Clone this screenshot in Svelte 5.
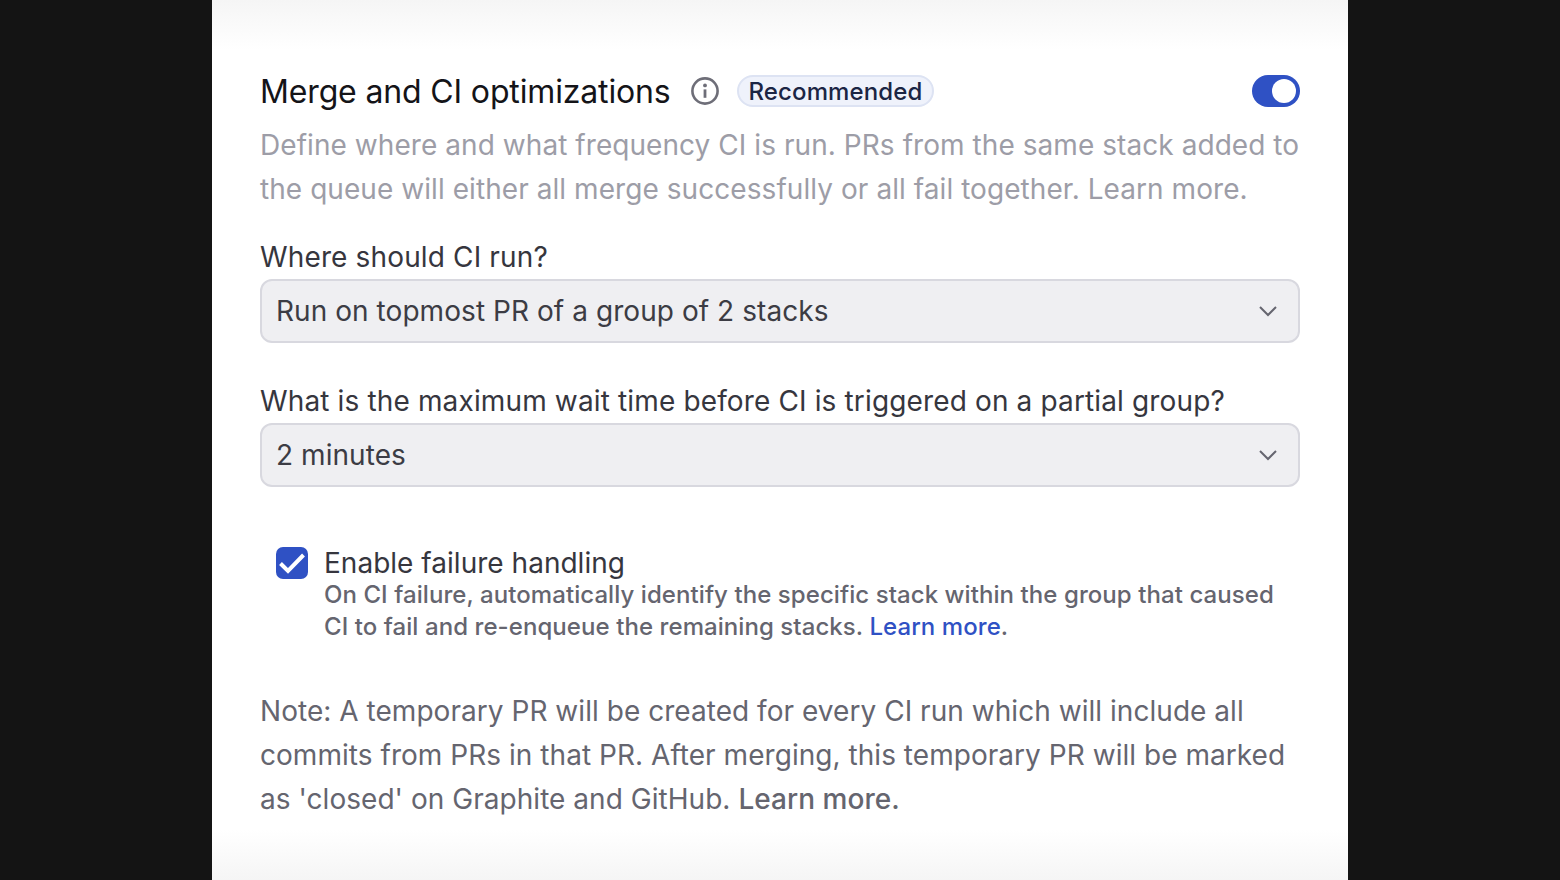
<script lang="ts">
	let enabled = $state(true);
	let failureHandling = $state(true);
	let where = $state('Run on topmost PR of a group of 2 stacks');
	let wait = $state('2 minutes');
</script>

<main class="stage">
	<section class="panel">
		<div class="fade top"></div>

		<header class="head">
			<h2>Merge and CI optimizations</h2>
			<svg class="info" viewBox="0 0 28 28" width="28" height="28" aria-hidden="true">
				<circle cx="14" cy="14" r="12.6" fill="none" stroke="#6e6e78" stroke-width="2.6" />
				<circle cx="14" cy="8.4" r="1.9" fill="#6e6e78" />
				<path d="M14 12.4v8.4" stroke="#6e6e78" stroke-width="2.8" fill="none" />
			</svg>
			<span class="badge">Recommended</span>
			<button
				type="button"
				class="toggle"
				role="switch"
				aria-checked={enabled}
				aria-label="Merge and CI optimizations"
				onclick={() => (enabled = !enabled)}
			>
				<span class="knob"></span>
			</button>
		</header>

		<p class="desc">
			Define where and what frequency CI is run. PRs from the same stack added to the queue will
			either all merge successfully or all fail together. Learn more.
		</p>

		<div class="field first">
			<span class="label">Where should CI run?</span>
			<div class="select">
				<span>{where}</span>
				<svg viewBox="0 0 20 12" width="20" height="12" aria-hidden="true">
					<path d="M2 2l8 8 8-8" fill="none" stroke="#65656f" stroke-width="2" />
				</svg>
			</div>
		</div>

		<div class="field second">
			<span class="label">What is the maximum wait time before CI is triggered on a partial group?</span>
			<div class="select">
				<span>{wait}</span>
				<svg viewBox="0 0 20 12" width="20" height="12" aria-hidden="true">
					<path d="M2 2l8 8 8-8" fill="none" stroke="#65656f" stroke-width="2" />
				</svg>
			</div>
		</div>

		<div class="check-row">
			<button
				type="button"
				class="check"
				role="checkbox"
				aria-checked={failureHandling}
				aria-label="Enable failure handling"
				onclick={() => (failureHandling = !failureHandling)}
			>
				<svg viewBox="0 0 32 32" width="32" height="32" aria-hidden="true">
					<path d="M4.5 16.5l7.5 7.5L27.5 8" fill="none" stroke="#fff" stroke-width="4" />
				</svg>
			</button>
			<div class="check-text">
				<div class="check-title">Enable failure handling</div>
				<p>
					On CI failure, automatically identify the specific stack within the group that caused CI
					to fail and re-enqueue the remaining stacks. <a href="#top">Learn more</a>.
				</p>
			</div>
		</div>

		<p class="note">
			Note: A temporary PR will be created for every CI run which will include all commits from PRs
			in that PR. After merging, this temporary PR will be marked as 'closed' on Graphite and
			GitHub. <strong>Learn more.</strong>
		</p>

		<div class="fade bottom"></div>
	</section>
</main>

<style>
	:global(body) {
		margin: 0;
		background: #141414;
	}
	.stage {
		height: 880px;
		overflow: hidden;
		display: flex;
		justify-content: center;
		font-family: Inter, 'Liberation Sans', sans-serif;
	}
	.panel {
		position: relative;
		box-sizing: border-box;
		width: 1136px;
		height: 880px;
		padding: 71px 48px 0;
		background: #fff;
	}
	.fade {
		position: absolute;
		left: 0;
		right: 0;
		height: 50px;
		pointer-events: none;
	}
	.fade.top {
		top: 0;
		background: linear-gradient(#f5f5f5, #fff);
	}
	.fade.bottom {
		bottom: 0;
		background: linear-gradient(#fff, #f5f5f5);
	}
	.head {
		display: flex;
		align-items: center;
		height: 40px;
	}
	h2 {
		margin: 0;
		padding-top: 2px;
		font-size: 32px;
		line-height: 40px;
		font-weight: 400;
		letter-spacing: -0.15px;
		color: #141418;
	}
	.info {
		margin-left: 20px;
	}
	.badge {
		margin-left: 18px;
		box-sizing: border-box;
		height: 32px;
		padding: 0 10px;
		display: flex;
		align-items: center;
		border: 2px solid #dde3f3;
		border-radius: 16px;
		background: #eff2fb;
		color: #1b2544;
		font-size: 24px;
		font-weight: 500;
		letter-spacing: 0.12px;
	}
	.toggle {
		margin-left: auto;
		box-sizing: border-box;
		width: 48px;
		height: 32px;
		padding: 4px;
		display: flex;
		justify-content: flex-end;
		border: 0;
		border-radius: 16px;
		background: #2f51c4;
		cursor: pointer;
	}
	.toggle[aria-checked='false'] {
		justify-content: flex-start;
		background: #c9c9d1;
	}
	.knob {
		width: 24px;
		height: 24px;
		border-radius: 50%;
		background: #fff;
	}
	.desc {
		margin: 12px 0 0;
		font-size: 28px;
		line-height: 44px;
		letter-spacing: 0.06px;
		color: #9d9da7;
	}
	.field {
		display: flex;
		flex-direction: column;
	}
	.field.first {
		margin-top: 24px;
	}
	.field.second {
		margin-top: 36px;
	}
	.label {
		font-size: 28px;
		line-height: 44px;
		font-weight: 400;
		letter-spacing: 0.14px;
		color: #36363e;
	}
	.select {
		box-sizing: border-box;
		height: 64px;
		padding: 0 20px 0 14px;
		display: flex;
		align-items: center;
		justify-content: space-between;
		border: 2px solid #d8d8df;
		border-radius: 12px;
		background: #efeff2;
		font-size: 28px;
		letter-spacing: 0.06px;
		color: #3c3c44;
	}
	.check-row {
		margin: 60px 0 0 16px;
		display: flex;
		gap: 16px;
	}
	.check {
		flex: none;
		width: 32px;
		height: 32px;
		padding: 0;
		border: 0;
		border-radius: 7px;
		background: #2f51c4;
		cursor: pointer;
	}
	.check svg {
		display: block;
	}
	.check[aria-checked='false'] svg {
		visibility: hidden;
	}
	.check-title {
		font-size: 28px;
		line-height: 32px;
		letter-spacing: 0.02px;
		color: #36363e;
	}
	.check-text p {
		margin: 0;
		font-size: 24px;
		line-height: 32px;
		font-weight: 500;
		letter-spacing: 0.07px;
		color: #65656f;
	}
	.check-text a {
		color: #2f51c4;
		text-decoration: none;
	}
	.note {
		margin: 46px 0 0;
		font-size: 28px;
		line-height: 44px;
		letter-spacing: 0.04px;
		color: #65656f;
	}
	.note strong {
		font-weight: 500;
	}
</style>
